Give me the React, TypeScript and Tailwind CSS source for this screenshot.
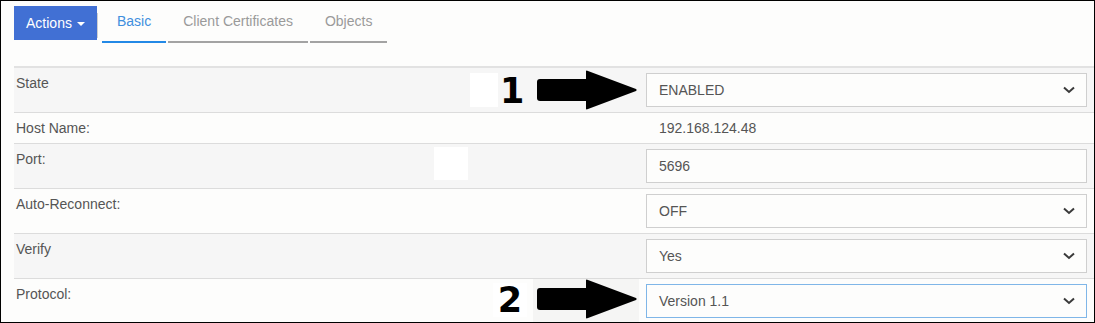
import type { ReactNode } from "react";

type Row = {
  label: string;
  kind: "select" | "input" | "text";
  value: string;
  shaded: boolean;
  focused?: boolean;
};

const rows: Row[] = [
  { label: "State", kind: "select", value: "ENABLED", shaded: true },
  { label: "Host Name:", kind: "text", value: "192.168.124.48", shaded: false },
  { label: "Port:", kind: "input", value: "5696", shaded: true },
  { label: "Auto-Reconnect:", kind: "select", value: "OFF", shaded: false },
  { label: "Verify", kind: "select", value: "Yes", shaded: true },
  { label: "Protocol:", kind: "select", value: "Version 1.1", shaded: false, focused: true },
];

function Chevron() {
  return (
    <svg width="12" height="8" viewBox="0 0 12 8" className="shrink-0">
      <polyline points="1,1.5 6,6 11,1.5" fill="none" stroke="#3a3a3a" strokeWidth="2" />
    </svg>
  );
}

function Field({ row }: { row: Row }) {
  if (row.kind === "text") {
    return <div className="pl-[13px] pt-[5px] pb-[5px] text-[#555]">{row.value}</div>;
  }
  const border = row.focused ? "border-[#7fb6e8]" : "border-[#cfcfcf]";
  return (
    <div className="py-[5px]">
      <div
        className={`flex h-[34px] items-center justify-between border bg-[#fdfdfc] pl-[12px] pr-[11px] text-[#555] ${border}`}
      >
        <span>{row.value}</span>
        {row.kind === "select" && <Chevron />}
      </div>
    </div>
  );
}

function Arrow({ top }: { top: number }) {
  return (
    <svg
      width="102"
      height="40"
      viewBox="0 0 102 40"
      className="absolute left-[535px]"
      style={{ top }}
    >
      <rect x="1" y="9" width="52" height="22" rx="3" fill="#000" />
      <path d="M50 1.5 Q50 0 52 1 L100 19 Q101.5 20 100 21 L52 39 Q50 40 50 38.5 Z" fill="#000" />
    </svg>
  );
}

function Tab({ children, active }: { children: ReactNode; active?: boolean }) {
  return (
    <div
      className={`px-[15px] pt-[5px] pb-[10px] border-b-2 ${
        active ? "border-[#2389e6] text-[#3f8fde]" : "border-[#a3a3a3] text-[#9a9a9a]"
      }`}
    >
      {children}
    </div>
  );
}

export default function App() {
  return (
    <div className="relative h-[323px] w-[1095px] overflow-hidden border border-black bg-[#fdfdfc] font-['Liberation_Sans',Arial,sans-serif] text-[14px] leading-[20px]">
      <div className="flex h-[65px] items-start pl-[13px] pt-[5px]">
        <button className="flex h-[34px] w-[83px] items-center justify-center gap-[5px] bg-[#4170d4] text-white">
          Actions
          <span className="mt-[2px] border-x-[4px] border-t-[4px] border-x-transparent border-t-white" />
        </button>
        <div className="mt-[7px] h-[25px] w-px bg-[#cfcfcf]" />
        <div className="ml-[4px] flex gap-[2px]">
          <Tab active>Basic</Tab>
          <Tab>Client Certificates</Tab>
          <Tab>Objects</Tab>
        </div>
      </div>
      <div className="ml-[13px] border-t-2 border-[#e2e2e2]">
        {rows.map((row) => (
          <div
            key={row.label}
            className={`grid grid-cols-[632px_1fr] border-b border-[#dcdcdc] pr-[7px] ${
              row.shaded ? "bg-[#f6f6f6]" : "bg-[#fdfdfc]"
            }`}
          >
            <div className="pl-[2px] pt-[5px] text-[#555]">{row.label}</div>
            <Field row={row} />
          </div>
        ))}
      </div>

      {/* annotation overlays */}
      <div className="absolute left-[469px] top-[72px] h-[34px] w-[28px] bg-white" />
      <div className="absolute left-[433px] top-[146px] h-[33px] w-[34px] bg-white" />
      <div className="absolute left-[499px] top-[70px] font-['DejaVu_Sans',sans-serif] text-[35px] font-bold leading-[40px] text-black">
        1
      </div>
      <Arrow top={69} />
      <div className="absolute left-[532px] top-[278px] h-[44px] w-[106px] bg-[#f5f5f4]" />
      <div className="absolute left-[492px] top-[282px] flex h-[34px] w-[34px] items-center justify-center bg-white font-['DejaVu_Sans',sans-serif] text-[35px] font-bold leading-[34px] text-black">
        2
      </div>
      <Arrow top={278} />
    </div>
  );
}
